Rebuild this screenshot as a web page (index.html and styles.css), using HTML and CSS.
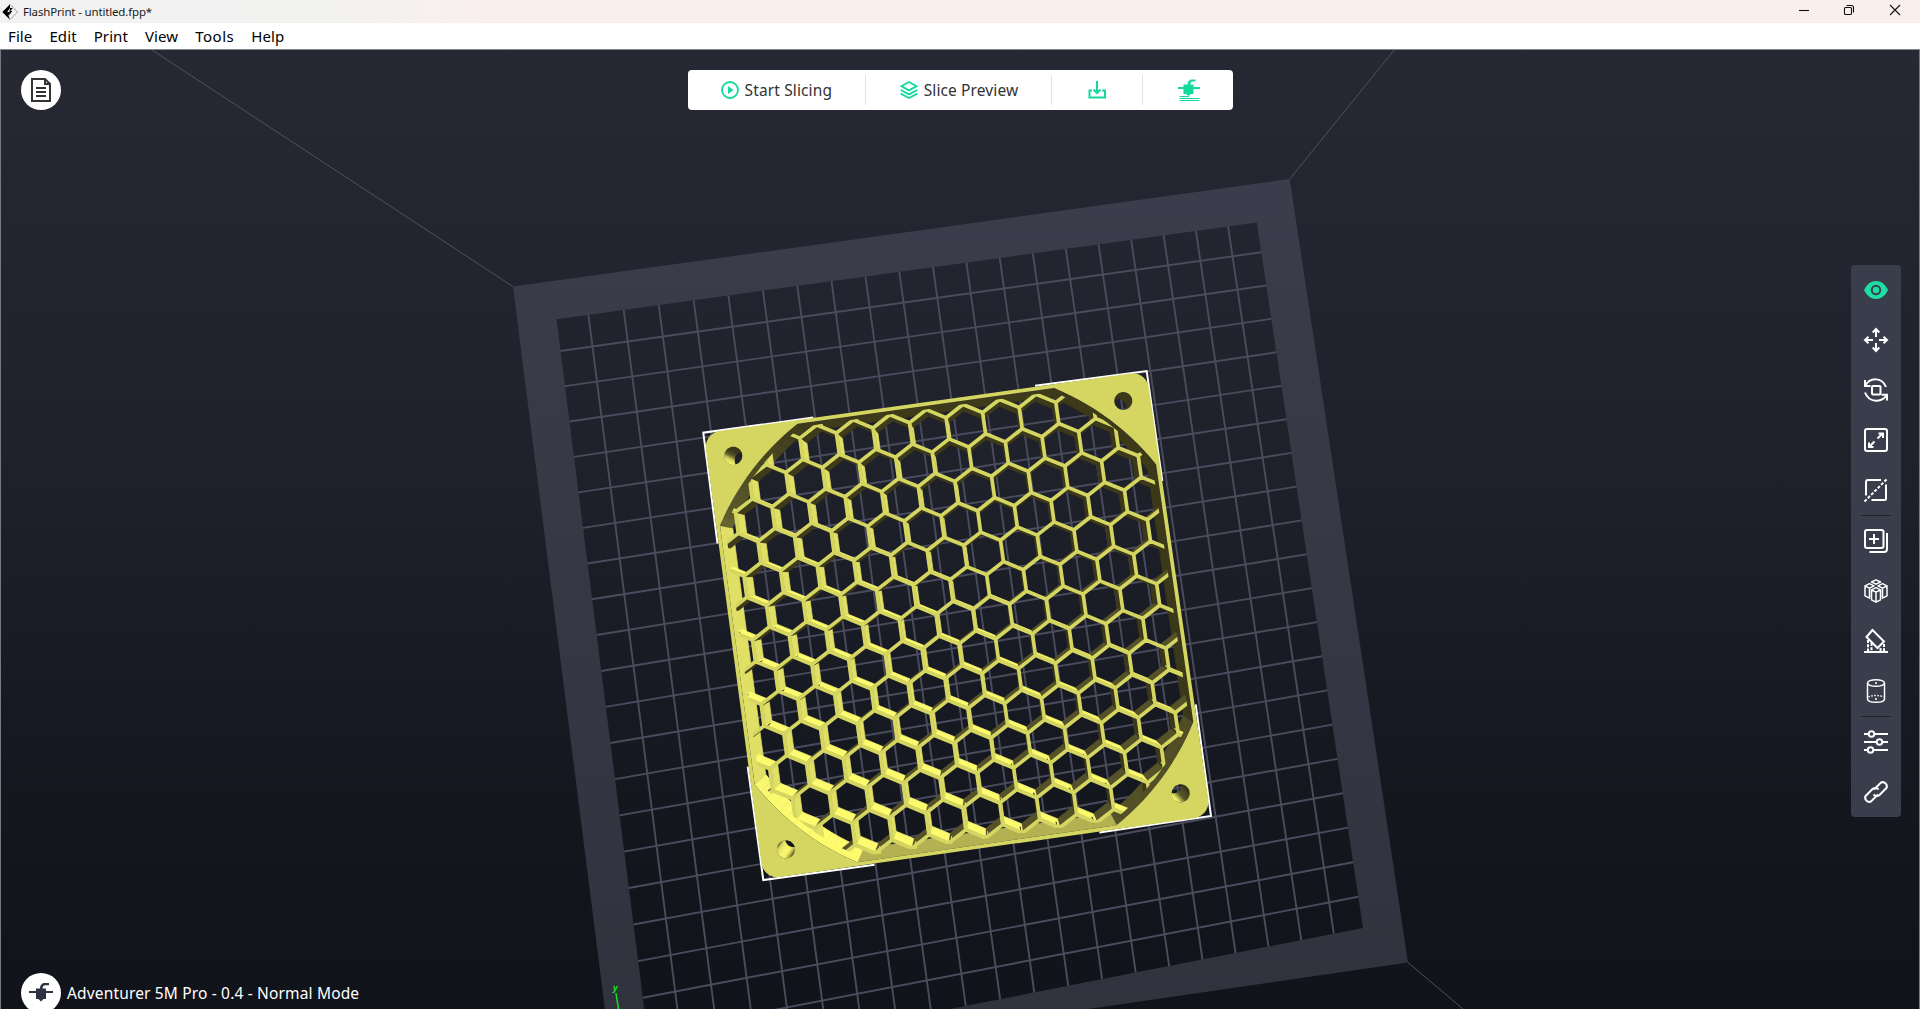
FILE: index.html
```html
<!DOCTYPE html>
<html lang="en">
<head>
<meta charset="utf-8">
<title>FlashPrint - untitled.fpp*</title>
<link rel="stylesheet" href="styles.css">
</head>
<body>
<div class="window">
  <header class="titlebar">
    <svg class="logo" width="16" height="16" viewBox="0 0 16 16"><path d="M8 .3V4L5.200 8H8l-1.500 3.500L8 15.700.3 8z" fill="#000"/><path d="M8 .3 15.500 8 8 15.700" fill="none" stroke="#777" stroke-width="1" stroke-dasharray="1.500 .7"/><path d="M8 4h2.700L8.500 7h1.800L7 11.500" fill="#000"/></svg>
    <span class="title">FlashPrint - untitled.fpp*</span>
    <div class="controls">
      <svg width="46" height="20" viewBox="0 0 46 20"><path d="M19 10.500h10"/></svg>
      <svg width="45" height="20" viewBox="0 0 45 20"><rect x="18.500" y="7.500" width="7" height="7" rx="1"/><path d="M20.500 5.500h5a2 2 0 0 1 2 2V12.500"/></svg>
      <svg width="46" height="20" viewBox="0 0 46 20"><path d="m19 5 10 10m0-10-10 10"/></svg>
    </div>
  </header>
  <nav class="menubar"><span>File</span><span>Edit</span><span>Print</span><span>View</span><span class="wide">Tools</span><span>Help</span></nav>
  <main class="viewport">
    <svg class="scene" id="scene" width="1920" height="959" viewBox="0 50 1920 959"></svg>

    <button class="round file-button" aria-label="Project">
      <svg width="24" height="26" viewBox="0 0 24 26" fill="none" stroke="#333" stroke-width="2"><path d="M3 2h13l5 5v17H3zM16 2v5h5M7 11h10M7 15h10M7 19h10"/></svg>
    </button>

    <div class="actions">
      <div class="action slice">
        <svg width="18" height="18" viewBox="0 0 18 18"><circle cx="9" cy="9" r="8" fill="none" stroke="#13d99d" stroke-width="1.800"/><path d="M7 5v8l5.500-4z" fill="#13d99d"/></svg>
        <span>Start Slicing</span>
      </div>
      <div class="action preview">
        <svg width="18" height="18" viewBox="0 0 18 18" fill="none" stroke="#13d99d" stroke-width="1.800"><path d="m9 1 7.500 4.200L9 9.400 1.500 5.200zM.7 9 9 13.400 17.300 9M.7 12.600 9 17l8.300-4.400"/></svg>
        <span>Slice Preview</span>
      </div>
      <div class="action save">
        <svg width="20" height="18" viewBox="0 0 20 18" fill="none" stroke="#13d99d" stroke-width="2"><path d="M10 0v12M6.500 8.500l3.500 3.500 3.500-3.500M5 9.500H2.500V16.500h15.500V9.500H15"/></svg>
      </div>
      <div class="action send">
        <svg width="22" height="22" viewBox="0 0 22 22"><path d="M0 8h5.500V5.500h4C9.500 2.500 11 .5 14 .5h3.500v2H14.500C13 2.500 12.300 4 12.300 5.500H15.500V8H22v2H15.500v5H13l-2.500 2L8 15H5.500v-5H0z" fill="#13d99d"/><path d="M1.500 17.500H11M1.500 19.500h20M1.500 21.500h20" stroke="#13d99d" stroke-width="1"/></svg>
      </div>
    </div>

    <aside class="tools">
      <div class="tool"><svg viewBox="0 0 24 24"><path d="M0 12C3 6 7 3 12 3s9 3 12 9c-3 6-7 9-12 9S3 18 0 12z" fill="#1ddfa4" stroke="none"/><circle cx="12" cy="12" r="4.200" fill="#1ddfa4" stroke="#3a3e4c"/></svg></div>
      <div class="tool"><svg viewBox="0 0 24 24"><path d="M12 9V2M8.700 4.500 12 1l3.300 3.500M12 15v7M8.700 19.500 12 23l3.300-3.500M9 12H2M4.500 8.700 1 12l3.500 3.300M15 12h7M19.500 8.700 23 12l-3.500 3.300"/></svg></div>
      <div class="tool"><svg viewBox="0 0 24 24"><rect x="8" y="8" width="8.500" height="8.500" rx="1"/><path d="M1 8C6-1 18-1 22 9M1 2v6h5.500M1 14.500C5 25 18 25 23 16.800M23 22.500V16.800h-5.500"/></svg></div>
      <div class="tool"><svg viewBox="0 0 24 24"><rect x="1" y="1" width="22" height="22" rx="2"/><path d="m13.500 10.500 5-5M14.500 5.500h4.500v4.500M10.500 13.500l-5 5M9.500 19H5v-4.500"/></svg></div>
      <div class="tool last"><svg viewBox="0 0 24 24"><path d="M17 2H4a2 2 0 0 0-2 2v13.500M22 6.500V20.500a1.500 1.500 0 0 1-1.500 1.500H7.500"/><path d="M.5 23.500 23.500.5" stroke-dasharray="3 1.700"/></svg></div>
      <div class="tool"><svg viewBox="0 0 24 24"><rect x="1" y="1" width="18.500" height="18" rx="2"/><path d="M10 5v10M5 10h10M23 4v16a3 3 0 0 1-3 3H5.500"/></svg></div>
      <div class="tool"><svg viewBox="0 0 24 24" stroke-linejoin="round"><path class="thin" d="m12 .8 4.500 2.200-4.500 2.200L7.500 3zM5.500 4.700 10 6.900 5.500 9.100 1 6.900zM18.500 4.700 14 6.900l4.500 2.200L23 6.900zM12 8.700l4.500 2.200-4.500 2.200-4.500-2.200zM1 6.900v10l4.500 2.200V9.100M23 6.900v10l-4.500 2.200V9.100M7.500 10.900v9.900L12 23.200l4.500-2.400v-9.900M12 13v10"/></svg></div>
      <div class="tool"><svg viewBox="0 0 24 24"><path d="M8.500 1 2.500 8l11 11 6.500-6.500zM0 23h24"/><path d="M4 11v11M7.500 14v8M16.500 19v3M20 15v7" stroke-dasharray="3 1.200"/></svg></div>
      <div class="tool last"><svg viewBox="0 0 24 24"><ellipse class="thin" cx="12" cy="4" rx="8.500" ry="3.300"/><path class="thin" d="M3.500 4v16c0 4.400 17 4.400 17 0V4M12 3v2M12 19v2"/><path class="thin" d="M4.500 18c3-2 12-2 15 0" stroke-dasharray="1.500 1.500"/></svg></div>
      <div class="tool"><svg viewBox="0 0 24 24"><path d="M0 4h4.500M10.500 4H24M0 12h12.500M18.500 12H24M0 20h3.500M9.500 20H24"/><circle cx="7.500" cy="4" r="2.800"/><circle cx="15.500" cy="12" r="2.800"/><circle cx="6.500" cy="20" r="2.800"/></svg></div>
      <div class="tool"><svg viewBox="0 0 24 24"><path d="M10 9.500 17 2.500a4.200 4.200 0 0 1 5.500 5.500l-7 7a4.200 4.200 0 0 1-6-.5M14 14.500 7 21.500A4.200 4.200 0 0 1 1.500 16l7-7a4.200 4.200 0 0 1 6 .5"/></svg></div>
    </aside>

    <div class="printer">
      <div class="round">
        <svg width="24" height="22" viewBox="0 0 24 22"><path d="M0 9h7V6.500h4C11 3 13 1 16 1h4v2.200h-3.500C14.500 3.200 13.500 4.500 13.500 6.500H17V9h7v2h-7v6h-2.500L12 19.500 9.500 17H7v-6H0z" fill="#2f3242"/></svg>
      </div>
      <span>Adventurer 5M Pro - 0.4 - Normal Mode</span>
    </div>
  </main>
</div>
<script src="scene.js"></script>
</body>
</html>
```
FILE: styles.css
```css
* { box-sizing: border-box; }
body { margin: 0; font-family: "Noto Sans", "Open Sans", sans-serif; overflow: hidden; }
.window { width: 1920px; height: 1009px; display: flex; flex-direction: column; background: #fff; }

.titlebar { height: 23px; display: flex; align-items: center; padding-left: 2px; background: linear-gradient(90deg, #f2f2f2 0, #f3f2f1 350px, #f9f0ee 480px, #f9f0ee 100%); }
.title { margin-left: 5px; font-size: 11.500px; letter-spacing: -.16px; color: #1a1a1a; line-height: 22px; }
.controls { margin-left: auto; display: flex; align-self: flex-start; padding-right: 3px; }
.controls svg { fill: none; stroke: #111; stroke-width: 1.100; }

.menubar { height: 27px; flex: none; display: flex; gap: 17px; padding-left: 8px; border-bottom: 1px solid #85868d; font-size: 15px; letter-spacing: .1px; line-height: 26px; color: #000; }
.wide { letter-spacing: .5px; }

.viewport { position: relative; flex: 1; border: solid #777982; border-width: 0 1px; background: linear-gradient(#262834, #1e202a 45%, #14161e 82%, #11131a); overflow: hidden; }
.scene { position: absolute; left: -1px; top: 0; }

.round { width: 40px; height: 40px; border: 0; padding: 0; border-radius: 50%; background: #fff; display: flex; align-items: center; justify-content: center; flex: none; }
.file-button { position: absolute; left: 20px; top: 20px; }

.actions { position: absolute; left: 687px; top: 20px; width: 545px; height: 40px; padding: 5px 0; display: flex; background: #fff; border-radius: 4px; }
.action { display: flex; align-items: center; justify-content: center; gap: 6px; font-size: 15.500px; letter-spacing: .12px; color: #333; white-space: nowrap; }
.action + .action { border-left: 1px solid #e2e2e2; }
.slice { width: 177px; }
.preview { width: 187px; padding-left: 1px; }
.save { width: 91px; }
.send { width: 91px; padding-left: 1px; }

.tools { position: absolute; left: 1850px; top: 215px; width: 50px; display: flex; flex-direction: column; background: #3a3e4c; border-radius: 4px; }
.tool { height: 50px; display: flex; align-items: center; justify-content: center; }
.tool svg { width: 24px; height: 24px; fill: none; stroke: #fff; stroke-width: 2; overflow: visible; }
.tool .thin { stroke-width: 1.500; }
.last { height: 51px; padding-bottom: 1px; background: linear-gradient(#22252f, #22252f) center bottom / 30px 1px no-repeat; }

.printer { position: absolute; left: 20px; top: 923px; display: flex; align-items: center; gap: 6px; color: #fff; font-size: 15.500px; letter-spacing: .16px; white-space: nowrap; }
```
FILE: scene.js
```js
// Solves the projective map that takes four plane points to four screen points.
function homography(src, dst) {
  const m = [];
  src.forEach(([x, y], i) => {
    const [u, v] = dst[i];
    m.push([x, y, 1, 0, 0, 0, -u * x, -u * y, u]);
    m.push([0, 0, 0, x, y, 1, -v * x, -v * y, v]);
  });
  for (let c = 0; c < 8; c++) {
    let p = c;
    for (let r = c; r < 8; r++) if (Math.abs(m[r][c]) > Math.abs(m[p][c])) p = r;
    [m[c], m[p]] = [m[p], m[c]];
    for (let r = 0; r < 8; r++) {
      if (r === c) continue;
      const f = m[r][c] / m[c][c];
      for (let k = c; k < 9; k++) m[r][k] -= f * m[c][k];
    }
  }
  const h = m.map((row, i) => row[8] / row[i]);
  return (x, y) => {
    const w = h[6] * x + h[7] * y + 1;
    return [(h[0] * x + h[1] * y + h[2]) / w, (h[3] * x + h[4] * y + h[5]) / w];
  };
}

const fmt = p => p[0].toFixed(2) + ' ' + p[1].toFixed(2);
const poly = pts => 'M' + pts.map(fmt).join('L') + 'Z';
const line = (a, b) => 'M' + fmt(a) + 'L' + fmt(b);

// Build plate
const bed = homography(
  [[-104, 104], [104, 104], [104, -104], [-104, -85]],
  [[556.5, 319.3], [1256.8, 222.4], [1363, 928], [642.8, 997.7]]);
let grid = '';
for (let k = -95; k <= 95; k += 10) {
  grid += line(bed(k, 104), bed(k, -104)) + line(bed(-104, k), bed(104, k));
}
const inner = poly([bed(-104, 104), bed(104, 104), bed(104, -104), bed(-104, -104)]);
const outer = poly([[513, 286.6], [1289.7, 179.1], [1408, 962.5], [613.7, 1078]]);

// Vertical edges converge on the point straight below the camera.
const NADIR = [985, 575];
const sink = (p, s) => [NADIR[0] + s * (p[0] - NADIR[0]), NADIR[1] + s * (p[1] - NADIR[1])];
const MESH_TOP = 0.98, FLOOR = 0.952, HOLE_FLOOR = 0.962;

// Wall colour by the direction it faces, in degrees from the model's +x axis.
const RAMP = [
  [0, 225, 224, 102], [30, 248, 247, 112], [50, 255, 253, 110], [67, 250, 248, 108],
  [90, 180, 178, 82], [115, 86, 82, 40], [150, 80, 76, 38], [165, 60, 57, 26],
  [300, 62, 59, 26], [325, 90, 88, 42], [340, 142, 140, 66], [352, 215, 214, 97], [360, 225, 224, 102]];
function shade(deg) {
  deg = (deg % 360 + 360) % 360;
  for (let i = 1; i < RAMP.length; i++) {
    if (deg <= RAMP[i][0]) {
      const a = RAMP[i - 1], b = RAMP[i], t = (deg - a[0]) / (b[0] - a[0]);
      return 'rgb(' + [1, 2, 3].map(k => Math.round(a[k] + t * (b[k] - a[k]))).join() + ')';
    }
  }
}

// Inside walls of a convex opening whose rim is given clockwise on screen.
function walls(rim, from, to) {
  let out = '';
  rim.forEach((a, i) => {
    const b = rim[(i + 1) % rim.length];
    const nx = -(b[1] - a[1]), ny = b[0] - a[0];
    if (nx * (NADIR[0] - a[0]) + ny * (NADIR[1] - a[1]) <= 0) return;
    const c = shade(Math.atan2(-ny, nx) * 180 / Math.PI - 7.9);
    out += `<path d="${poly([sink(a, from), sink(b, from), sink(b, to), sink(a, to)])}" fill="${c}" stroke="${c}" stroke-width=".7" stroke-linejoin="bevel"/>`;
  });
  return out;
}

// Fan frame
const frame = homography([[-60, 60], [60, 60], [60, -60], [-60, -60]],
  [[703.8, 433.2], [1146.4, 371.4], [1210.6, 815.6], [763.6, 879.4]]);
const body = [];
[[1, 1, 90], [1, -1, 0], [-1, -1, -90], [-1, 1, -180]].forEach(([sx, sy, start]) => {
  for (let t = 0; t <= 90; t += 10) {
    const a = (start - t) * Math.PI / 180;
    body.push(frame(sx * 55.7 + 4.3 * Math.cos(a), sy * 55.7 + 4.3 * Math.sin(a)));
  }
});
const RADIUS = 68.5, HALF = 59;
const cut = Math.acos(HALF / RADIUS) * 180 / Math.PI;
const rim = [];
for (let q = 0; q < 4; q++) {
  for (let i = 0; i <= 14; i++) {
    const a = -(q * 90 + cut + (90 - 2 * cut) * i / 14) * Math.PI / 180;
    rim.push(frame(RADIUS * Math.cos(a), RADIUS * Math.sin(a)));
  }
}
const ring = (cx, cy, r, n) => Array.from({ length: n }, (_, i) => [
  cx + r * Math.cos(i * 2 * Math.PI / n), cy + r * Math.sin(i * 2 * Math.PI / n)]);
const holes = [[733.3, 455.7], [1123.3, 401], [1180.7, 793.3], [786, 849.3]].map(h => ring(h[0], h[1], 9, 32));

// Honeycomb
const S3 = Math.sqrt(3);
const comb = homography([[0, -1], [6 * S3, -1], [6 * S3, 19], [0, 19]],
  [[816.7, 425], [1036, 394.3], [1096.7, 822.7], [875, 853.3]]);
let combWalls = '', combTop = '';
for (let row = -1; row <= 13; row++) {
  for (let col = -5; col <= 11; col++) {
    const cx = S3 * (col + (row % 2 ? 0.5 : 0)), cy = 1.5 * row;
    const hex = r => [-90, -30, 30, 90, 150, 210].map(d =>
      comb(cx + r * Math.cos(d * Math.PI / 180), cy + r * Math.sin(d * Math.PI / 180)));
    combWalls += walls(hex(0.91), 1, FLOOR / MESH_TOP);
    const o = hex(1);
    combTop += line(o[0], o[1]) + line(o[1], o[2]) + line(o[2], o[3]);
  }
}

// Selection brackets on the bounding box
const brackets = [
  [[813.3, 417.6], [703.3, 432.7], [717.5, 543.5]],
  [[1035, 385.7], [1146.7, 371], [1162.3, 481]],
  [[1195.7, 704.3], [1211, 816], [1099.3, 832.5]],
  [[747.7, 766.7], [763.3, 880], [874.5, 864.8]]].map(b => 'M' + b.map(fmt).join('L')).join('');

document.getElementById('scene').innerHTML = `
<defs>
  <linearGradient id="plate" gradientUnits="userSpaceOnUse" x1="0" y1="180" x2="0" y2="1009">
    <stop offset="0" stop-color="#3b3d4c"/><stop offset="1" stop-color="#30323e"/>
  </linearGradient>
  <clipPath id="opening"><path d="${poly(rim)}"/></clipPath>
  <clipPath id="meshArea"><path d="${poly(rim.map(p => sink(p, MESH_TOP)))}"/></clipPath>
  ${holes.map((h, i) => `<clipPath id="hole${i}"><path d="${poly(h)}"/></clipPath>`).join('')}
</defs>
<path d="M152 50L513 286.600M1395 49L1289.700 179M1408 962.500L1463 1009" stroke="#50515d" fill="none"/>
<path d="${outer}${inner}" fill="url(#plate)" fill-rule="evenodd"/>
<path d="${grid}" stroke="#4a4c5e" stroke-width="1.900" fill="none"/>
<path d="${brackets}" stroke="#fff" stroke-width="2" fill="none"/>
<g clip-path="url(#opening)">${walls(rim, 1, FLOOR)}</g>
<g clip-path="url(#meshArea)">${combWalls}<path d="${combTop}" stroke="#d5d661" stroke-width="3.700" stroke-linecap="round" fill="none"/></g>
${holes.map((h, i) => `<g clip-path="url(#hole${i})">${walls(h, 1, HOLE_FLOOR)}</g>`).join('')}
<path d="${poly(body)}${poly(rim)}${holes.map(poly).join('')}" fill="#d5d661" fill-rule="evenodd"/>
<path d="M616 993L618.500 1009" stroke="#12e41c" stroke-width="1.500"/>
<text x="613" y="990.500" font-family="Noto Sans, sans-serif" font-size="9" font-style="italic" font-weight="700" fill="#12e41c">y</text>`;
```
